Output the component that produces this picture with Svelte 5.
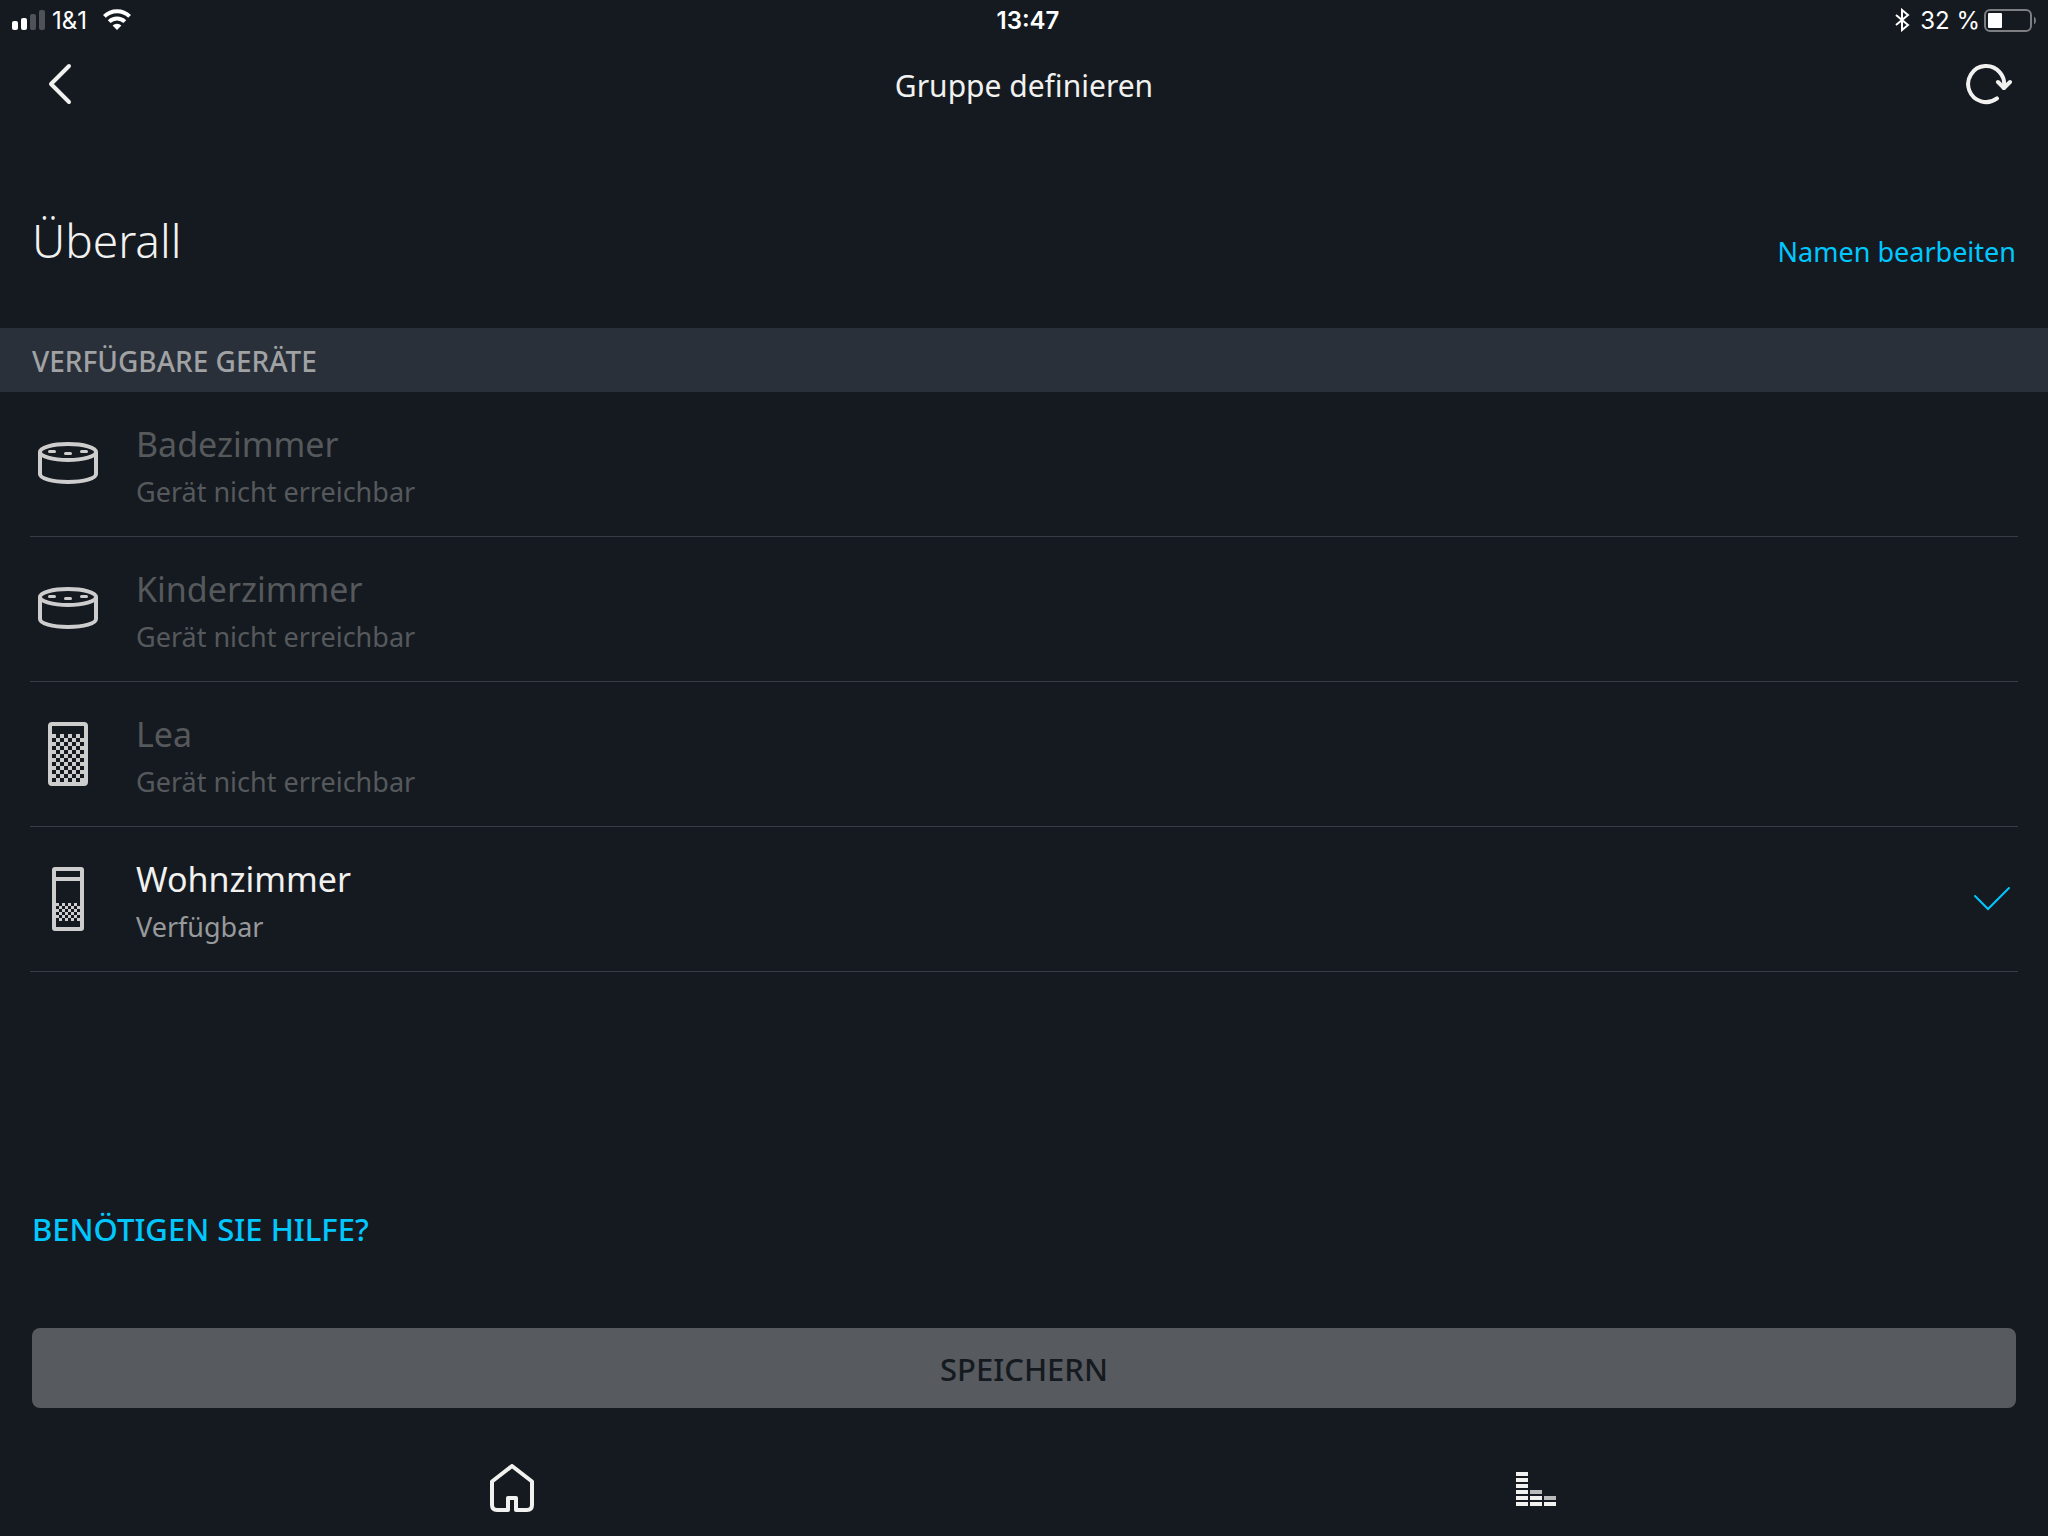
<script lang="ts">
	type Device = {
		id: string;
		name: string;
		kind: 'dot' | 'echo' | 'plus';
		online: boolean;
		selected: boolean;
	};

	let devices = $state<Device[]>([
		{ id: 'bad', name: 'Badezimmer', kind: 'dot', online: false, selected: false },
		{ id: 'kind', name: 'Kinderzimmer', kind: 'dot', online: false, selected: false },
		{ id: 'lea', name: 'Lea', kind: 'echo', online: false, selected: false },
		{ id: 'wohn', name: 'Wohnzimmer', kind: 'plus', online: true, selected: true }
	]);

	// checkerboard cells for the speaker grilles
	function grille(cols: number, rows: number, size: number, x: number, y: number) {
		let d = '';
		for (let row = 0; row < rows; row++) {
			for (let col = 0; col < cols; col++) {
				if ((row + col) % 2 === 0) {
					d += `M${x + col * size} ${y + row * size}h${size}v${size}h-${size}z`;
				}
			}
		}
		return d;
	}

	const echoGrille = grille(8, 12, 4, 16, 12);
	const plusGrille = grille(8, 6, 3, 20, 36);
</script>

<div class="screen">
	<div class="status">
		<div class="status-side">
			<svg width="34" height="24" viewBox="0 0 34 24" fill="#fff" aria-hidden="true">
				<rect x="0" y="13" width="6" height="9" rx="2" />
				<rect x="9" y="10" width="6" height="12" rx="2" />
				<rect x="18" y="6" width="6" height="16" rx="2" opacity="0.25" />
				<rect x="27" y="2" width="6" height="20" rx="2" opacity="0.25" />
			</svg>
			<span class="carrier">1&amp;1</span>
			<svg width="28" height="24" viewBox="0 0 28 24" aria-hidden="true">
				<g fill="none" stroke="#fff" stroke-width="4">
					<path d="M1.4 8.4a18 18 0 0 1 25.2 0" />
					<path d="M6.2 13.6a11.2 11.2 0 0 1 15.6 0" />
				</g>
				<path d="M14 22l-4.4-4.4a6.4 6.4 0 0 1 8.8 0z" fill="#fff" />
			</svg>
		</div>
		<time class="clock">13:47</time>
		<div class="status-side end">
			<svg width="16" height="24" viewBox="0 0 16 24" fill="none" stroke="#fff" stroke-width="2" aria-hidden="true">
				<path d="M2 7l12 10-6 5V2l6 5L2 17" />
			</svg>
			<span class="percent">32 %</span>
			<svg width="60" height="24" viewBox="0 0 60 24" aria-hidden="true">
				<rect x="1" y="2" width="46" height="21" rx="5" fill="none" stroke="#7c7e82" stroke-width="2" />
				<rect x="4" y="5" width="14" height="15" rx="1" fill="#fff" />
				<path d="M50 8.500a5 5 0 0 1 0 8z" fill="#7c7e82" />
			</svg>
		</div>
	</div>

	<header class="bar">
		<button class="icon-button" type="button" aria-label="Zurück">
			<svg width="48" height="48" viewBox="0 0 48 48" fill="none" stroke="#f1f1ef" stroke-width="4" stroke-linecap="round" stroke-linejoin="round">
				<path d="M33 6L15 24l18 18" />
			</svg>
		</button>
		<h1>Gruppe definieren</h1>
		<button class="icon-button" type="button" aria-label="Aktualisieren">
			<svg width="48" height="48" viewBox="0 0 48 48" fill="none" stroke="#f1f1ef" stroke-width="4" stroke-linecap="round" stroke-linejoin="round">
				<path d="M33 38.400A18 18 0 1 1 39.700 28" />
				<path d="M34 22l6 6 6-6" />
			</svg>
		</button>
	</header>

	<main>
		<section class="group">
			<h2>Überall</h2>
			<button class="link" type="button">Namen bearbeiten</button>
		</section>

		<h3>VERFÜGBARE GERÄTE</h3>
		<ul>
			{#each devices as device (device.id)}
				<li>
					<label class="device" class:online={device.online}>
						<svg width="64" height="64" viewBox="0 0 64 64" aria-hidden="true">
							{#if device.kind === 'dot'}
								<g fill="none" stroke="#cdcdcd" stroke-width="4">
									<ellipse cx="32" cy="20" rx="28" ry="8" />
									<path d="M4 20v22c0 4.500 12 8 28 8s28-3.500 28-8V20" />
								</g>
								<g fill="#cdcdcd">
									<rect x="12" y="18" width="8" height="3" rx="1.500" />
									<rect x="28" y="20" width="8" height="3" rx="1.500" />
									<rect x="44" y="18" width="8" height="3" rx="1.500" />
								</g>
							{:else if device.kind === 'echo'}
								<rect x="14" y="2" width="36" height="60" rx="2" fill="none" stroke="#cdcdcd" stroke-width="4" />
								<path d={echoGrille} fill="#cdcdcd" />
							{:else}
								<rect x="18" y="2" width="28" height="60" rx="1" fill="none" stroke="#cdcdcd" stroke-width="4" />
								<path d="M18 12h28" stroke="#cdcdcd" stroke-width="4" />
								<path d={plusGrille} fill="#cdcdcd" />
							{/if}
						</svg>
						<span class="text">
							<span class="name">{device.name}</span>
							<span class="state">{device.online ? 'Verfügbar' : 'Gerät nicht erreichbar'}</span>
						</span>
						<input type="checkbox" bind:checked={device.selected} disabled={!device.online} />
						<svg class="check" width="40" height="40" viewBox="0 0 40 40" fill="none" stroke="#00c8ff" stroke-width="2" stroke-linecap="round" aria-hidden="true">
							<path d="M3 17l13 13 21-21" />
						</svg>
					</label>
				</li>
			{/each}
		</ul>
	</main>

	<footer>
		<button class="help" type="button">BENÖTIGEN SIE HILFE?</button>
		<button class="save" type="button">SPEICHERN</button>
	</footer>

	<nav>
		<button class="tab" type="button" aria-label="Startseite">
			<svg width="48" height="48" viewBox="0 0 48 48" fill="none" stroke="#f1f1ef" stroke-width="4" stroke-linejoin="round">
				<path d="M20 46H9q-5 0-5-5V17.500L24 2l20 15.500V41q0 5-5 5H28V34h-8v12z" />
				<path d="M24 44v4" stroke="#151a21" />
			</svg>
		</button>
		<button class="tab" type="button" aria-label="Wiedergabe">
			<svg width="48" height="48" viewBox="0 0 48 48" fill="#f1f1ef">
				<path d="M4 8h12v4H4zM4 14h12v4H4zM4 20h12v4H4zM4 26h12v4H4zM4 32h12v4H4zM4 38h12v4H4z" />
				<path d="M18 32h12v4H18zM18 38h12v4H18zM32 38h12v4H32z" />
				<path d="M18 26h12v4H18zM32 32h12v4H32z" fill="#b9babb" />
			</svg>
		</button>
	</nav>
</div>

<style>
	:global(body) {
		margin: 0;
		background: #151a21;
	}

	.screen {
		display: flex;
		flex-direction: column;
		min-height: 100vh;
		background: #151a21;
		color: #f1f1ef;
		font-family: 'Noto Sans', 'Open Sans', sans-serif;
	}

	button {
		padding: 0;
		border: 0;
		background: none;
		color: inherit;
		font: inherit;
		cursor: pointer;
	}

	svg {
		display: block;
		flex: none;
	}

	.status {
		display: grid;
		grid-template-columns: 1fr auto 1fr;
		align-items: center;
		height: 40px;
		padding: 0 4px 0 12px;
		color: #fff;
		font-family: Inter, Roboto, sans-serif;
		font-size: 24px;
		line-height: 32px;
	}

	.status-side {
		display: flex;
		align-items: center;
		gap: 6px;
	}

	.end {
		justify-content: flex-end;
		gap: 4px;
	}

	.carrier,
	.clock,
	.percent {
		padding-top: 2px;
	}

	.carrier {
		margin-right: 10px;
	}

	.percent {
		margin-left: 6px;
	}

	.clock {
		font-weight: 600;
	}

	.bar {
		display: flex;
		align-items: center;
		justify-content: space-between;
		height: 88px;
		padding: 0 36px;
	}

	.icon-button {
		width: 48px;
		height: 48px;
	}

	h1,
	h2,
	h3,
	ul {
		margin: 0;
		padding: 0;
		font-weight: 400;
	}

	h1 {
		padding-top: 4px;
		font-size: 30px;
		line-height: 40px;
	}

	.group {
		display: flex;
		align-items: flex-end;
		justify-content: space-between;
		padding: 80px 32px 56px;
	}

	h2 {
		font-size: 46px;
		font-weight: 300;
		line-height: 64px;
	}

	.link {
		color: #00c8ff;
		font-size: 27px;
		line-height: 40px;
	}

	h3 {
		padding: 2px 32px 0;
		background: #29303a;
		color: #a0a2a4;
		font-size: 28px;
		font-weight: 500;
		line-height: 62px;
	}

	ul {
		padding: 0 30px;
		list-style: none;
	}

	li {
		border-bottom: 1px solid #373d47;
	}

	.device {
		display: flex;
		align-items: center;
		gap: 36px;
		min-height: 144px;
		padding: 0 6px;
		color: #56595c;
	}

	.text {
		display: flex;
		flex: 1;
		flex-direction: column;
		padding-top: 8px;
	}

	.name {
		font-size: 34px;
		line-height: 48px;
	}

	.state {
		font-size: 27px;
		line-height: 48px;
	}

	.online .name {
		color: #f1f1ef;
	}

	.online .state {
		color: #97999b;
	}

	input {
		position: absolute;
		opacity: 0;
	}

	.check {
		visibility: hidden;
	}

	input:checked + .check {
		visibility: visible;
	}

	footer {
		display: flex;
		flex-direction: column;
		align-items: flex-start;
		gap: 75px;
		margin-top: auto;
		padding: 32px;
	}

	.help {
		color: #00c8ff;
		font-size: 31px;
		font-weight: 500;
		line-height: 48px;
	}

	.save {
		width: 100%;
		padding-top: 2px;
		border-radius: 8px;
		background: #575a5e;
		color: #151a21;
		font-size: 31px;
		font-weight: 500;
		line-height: 78px;
	}

	nav {
		display: grid;
		grid-template-columns: 1fr 1fr;
		height: 96px;
	}

	.tab {
		display: grid;
		place-items: center;
	}
</style>
